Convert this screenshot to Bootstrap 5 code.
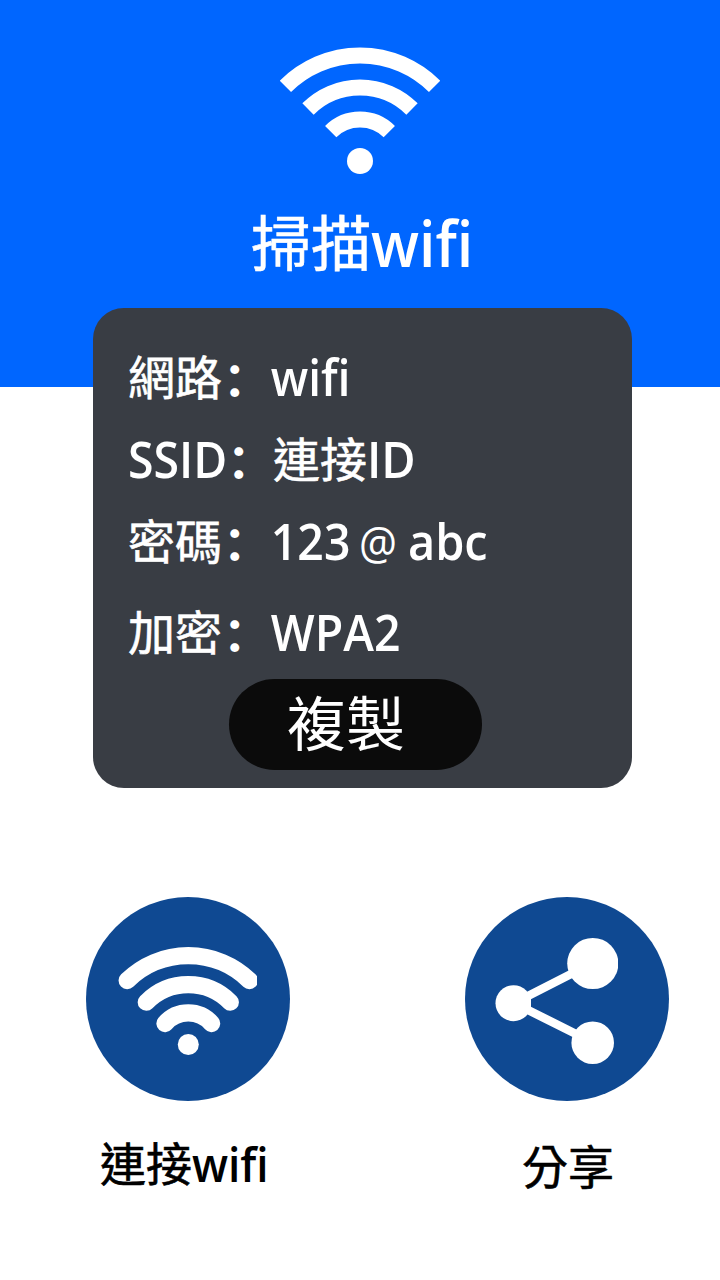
<!DOCTYPE html>
<html lang="zh-Hant">
<head>
<meta charset="utf-8">
<meta name="viewport" content="width=device-width, initial-scale=1">
<title>掃描wifi</title>
<link href="https://cdn.jsdelivr.net/npm/bootstrap@5.3.0/dist/css/bootstrap.min.css" rel="stylesheet">
<style>
body{font-family:"Noto Sans CJK TC",sans-serif;background:#fff;color:#000;height:1280px;overflow:hidden}
.hero{background:#06f;height:387px;padding-top:47px}
.line{display:flex;align-items:baseline;white-space:nowrap;font-weight:400}
.line>span{flex:none}
.han{-webkit-text-stroke:.6px currentColor;transform:translateY(-1.5px)}
.lat{font-family:"Open Sans",sans-serif;font-weight:560;transform-origin:left}
.colon{font-family:"Noto Sans CJK SC",sans-serif;font-weight:700;transform:translateX(1px)}
.title{font-size:60px;height:80px;line-height:80px;margin:27px 0 0 251px}
.title .lat{font-size:64px}
.info{width:539px;height:480px;margin:-79px 0 0 93px;border-radius:31px;background:#393d44;color:#fff;padding-left:35px;position:relative}
.info .line{font-size:47px;height:60px;line-height:60px}
.info .lat{font-size:51px}
.copy{width:253px;height:91px;border-radius:46px;background:#0b0b0b;color:#fff;font-size:59px;line-height:83px;padding:0 0 8px 58px;border:0;text-align:left;display:block;font-weight:400}
.actions{margin-top:109px;padding-left:86px;gap:175px}
.action{width:204px}
.action .line{font-size:46px;height:60px;line-height:60px}
.action .lat{font-size:47px}
</style>
</head>
<body>
<header class="hero text-white">
  <svg class="d-block mx-auto" width="160" height="127" viewBox="280 47 160 127" fill="none" stroke="#fff" stroke-width="16">
    <path d="M285.4 86.4A105.5 105.5 0 0 1 434.6 86.4M308 109A73.5 73.5 0 0 1 412 109M330.7 131.6A41.5 41.5 0 0 1 389.3 131.6"/>
    <circle cx="360" cy="161" r="13" fill="#fff" stroke="none"/>
  </svg>
  <h1 class="line title"><span class="han">掃描</span><span class="lat" style="transform:scaleX(.92)">wifi</span></h1>
</header>
<main>
  <section class="info">
    <div class="line" style="padding-top:38px;height:98px"><span class="han">網路</span><span class="colon">：</span><span class="lat" style="transform:scaleX(.9);padding-left:2px">wifi</span></div>
    <div class="line" style="margin-top:22px"><span class="lat" style="transform:scaleX(.91);width:98px">SSID</span><span class="colon">：</span><span class="han">連接</span><span class="lat" style="transform:scaleX(.92)">ID</span></div>
    <div class="line" style="margin-top:22px"><span class="han">密碼</span><span class="colon">：</span><span class="lat" style="transform:scaleX(.91);padding-left:2px;width:90px">123</span><span class="lat" style="font-size:46px;font-weight:400;transform:scaleX(.92);width:48px">@</span><span class="lat" style="transform:scaleX(.92);padding-left:1px">abc</span></div>
    <div class="line" style="margin-top:31px"><span class="han">加密</span><span class="colon">：</span><span class="lat" style="transform:scaleX(.91);padding-left:2px">WPA2</span></div>
    <button class="copy" style="margin:18px 0 0 101px">複製</button>
  </section>
  <nav class="actions d-flex">
    <div class="action">
      <svg class="d-block" width="204" height="204" viewBox="86 897 204 204">
        <circle cx="188" cy="999" r="102" fill="#0f4992"/>
        <clipPath id="arcs"><path d="M86 897H257V1101H86z"/></clipPath>
        <g clip-path="url(#arcs)" fill="none" stroke="#fff" stroke-width="17.3" stroke-linecap="round">
          <path d="M127.2 980.5A87.7 87.7 0 0 1 249.4 980.5M146.3 1002.2A59 59 0 0 1 230.3 1002.2M165 1023.5A31 31 0 0 1 211.6 1023.5"/>
        </g>
        <circle cx="188.3" cy="1044.5" r="10.5" fill="#fff"/>
      </svg>
      <div class="line" style="margin:31px 0 0 14px"><span class="han">連接</span><span class="lat" style="transform:scaleX(.94)">wifi</span></div>
    </div>
    <div class="action">
      <svg class="d-block" width="204" height="204" viewBox="465 897 204 204">
        <circle cx="567" cy="999" r="102" fill="#0f4992"/>
        <clipPath id="node"><path d="M465 897H531V1101H465z"/></clipPath>
        <clipPath id="big"><path d="M531 897H618V1101H531z"/></clipPath>
        <path d="M526 997L575 972M526 1009L578 1035" stroke="#fff" stroke-width="8.5"/>
        <g fill="#fff"><circle cx="513.5" cy="1003.2" r="18" clip-path="url(#node)"/><circle cx="592.8" cy="963.5" r="25.6" clip-path="url(#big)"/><circle cx="592.7" cy="1042.7" r="21.3"/></g>
      </svg>
      <div class="line" style="margin:34px 0 0 57px"><span class="han">分享</span></div>
    </div>
  </nav>
</main>
<script src="https://cdn.jsdelivr.net/npm/bootstrap@5.3.0/dist/js/bootstrap.bundle.min.js"></script>
</body>
</html>
